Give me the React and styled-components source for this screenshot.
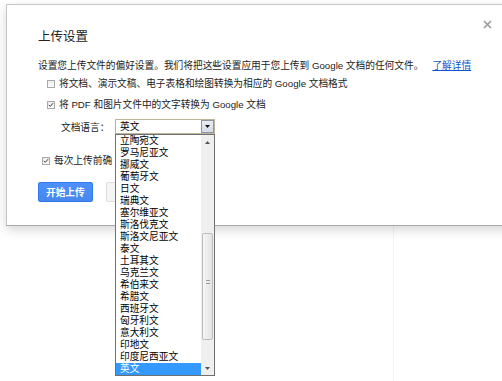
import React from "react";
import styled, { createGlobalStyle } from "styled-components";

const GlobalStyle = createGlobalStyle`
  html, body {
    margin: 0;
    padding: 0;
    background: #ffffff;
    overflow: hidden;
  }
  body {
    font-family: "Liberation Sans", Arial, "Noto Sans CJK SC", sans-serif;
    font-size: 9.7px;
    color: #222;
  }
`;

const Page = styled.div`
  padding: 4px 0 0 6px;
  width: 496px;
`;

const Dialog = styled.div`
  position: relative;
  width: 520px;
  background: #fff;
  border: 1px solid #c6c6c6;
  border-bottom-color: #a8a8a8;
  box-shadow: 0 4px 10px rgba(0, 0, 0, 0.16);
  padding: 25px 0 23px 31px;
  z-index: 2;
`;

const CloseButton = styled.div`
  position: absolute;
  top: 15px;
  left: 476px;
  width: 9px;
  height: 9px;
  display: flex;
  cursor: pointer;
`;

const Title = styled.div`
  font-size: 12.5px;
  line-height: 14px;
  height: 14px;
  color: #222;
`;

const Description = styled.div`
  margin-top: 16px;
  line-height: 12px;
  height: 12px;
  white-space: nowrap;
  color: #222;
`;

const Link = styled.a`
  margin-left: 9px;
  color: #1155cc;
  text-decoration: underline;
`;

const CheckRow = styled.div`
  display: flex;
  align-items: center;
  gap: 4px;
  height: 12px;
  line-height: 12px;
  margin-top: ${(p) => p.$top}px;
  padding-left: ${(p) => p.$indent}px;
  white-space: nowrap;
`;

const Box = styled.span`
  width: 8px;
  height: 8px;
  box-sizing: border-box;
  border: 1px solid #a9a9a9;
  background: linear-gradient(#ececec, #fdfdfd);
  display: flex;
  align-items: center;
  justify-content: center;
  flex: none;
`;

const LangRow = styled.div`
  display: flex;
  align-items: center;
  gap: 5px;
  height: 15px;
  margin-top: 8px;
  padding-left: 23px;
`;

const Label = styled.span`
  width: 49px;
  white-space: nowrap;
`;

const Select = styled.div`
  position: relative;
  box-sizing: border-box;
  width: 100px;
  height: 15px;
  border: 1px solid #bdb597;
  display: flex;
  background: #fff;
`;

const SelectValue = styled.span`
  flex: 1;
  padding-left: 4px;
  line-height: 13px;
  color: #000;
`;

const SelectArrow = styled.span`
  width: 13px;
  box-sizing: border-box;
  border: 1px solid #8797a8;
  background: linear-gradient(#e9edf2, #d4dbe4);
  display: flex;
  align-items: center;
  justify-content: center;
`;

const Dropdown = styled.div`
  position: absolute;
  top: calc(100% + 1px);
  left: -1px;
  width: 100px;
  box-sizing: border-box;
  border: 1px solid #707070;
  background: #fff;
  display: flex;
  z-index: 5;
`;

const Options = styled.div`
  flex: 1;
  display: flex;
  flex-direction: column;
`;

const Option = styled.div`
  height: 12px;
  line-height: 12px;
  padding-left: 4px;
  white-space: nowrap;
  color: ${(p) => (p.$selected ? "#fff" : "#000")};
  background: ${(p) => (p.$selected ? "#3399ff" : "transparent")};
`;

const Scrollbar = styled.div`
  width: 13px;
  display: flex;
  flex-direction: column;
  background: #efefef;
`;

const ScrollArrow = styled.div`
  height: 14px;
  display: flex;
  align-items: center;
  justify-content: center;
`;

const Track = styled.div`
  flex: 1;
  padding-top: 84px;
`;

const Thumb = styled.div`
  height: 107px;
  margin: 0 1px;
  box-sizing: border-box;
  border: 1px solid #bdbdbd;
  border-radius: 2px;
  background: linear-gradient(90deg, #f6f6f6, #e3e3e3);
  display: flex;
  align-items: center;
  justify-content: center;
`;

const Grip = styled.div`
  width: 4px;
  height: 4px;
  border-top: 1px solid #999;
  border-bottom: 1px solid #999;
  box-sizing: border-box;
  margin-top: -10px;
`;

const Actions = styled.div`
  display: flex;
  gap: 13px;
  margin-top: 15px;
`;

const Button = styled.div`
  height: 20px;
  min-width: ${(p) => (p.$primary ? 0 : 44)}px;
  box-sizing: border-box;
  padding: 0 7px;
  border-radius: 2px;
  display: flex;
  align-items: center;
  font-weight: bold;
  white-space: nowrap;
  color: ${(p) => (p.$primary ? "#fff" : "#444")};
  background: ${(p) => (p.$primary ? "linear-gradient(#4d90fe, #4787ed)" : "#f5f5f5")};
  border: 1px solid ${(p) => (p.$primary ? "#3079ed" : "#dcdcdc")};
`;

const Below = styled.div`
  display: grid;
  grid-template-columns: 387px 1fr;
  height: 160px;
`;

const Column = styled.div`
  border-left: ${(p) => (p.$divided ? "1px solid #f4f4f2" : "none")};
`;

const languages = [
  "立陶宛文",
  "罗马尼亚文",
  "挪威文",
  "葡萄牙文",
  "日文",
  "瑞典文",
  "塞尔维亚文",
  "斯洛伐克文",
  "斯洛文尼亚文",
  "泰文",
  "土耳其文",
  "乌克兰文",
  "希伯来文",
  "希腊文",
  "西班牙文",
  "匈牙利文",
  "意大利文",
  "印地文",
  "印度尼西亚文",
  "英文",
];

const Check = ({ checked }) => (
  <Box>
    {checked && (
      <svg width="8" height="8" viewBox="0 0 8 8">
        <path d="M1 3.8 L3 5.8 L6.8 1.6" fill="none" stroke="#2b2b2b" strokeWidth="1.2" />
      </svg>
    )}
  </Box>
);

const Triangle = ({ up, color = "#111" }) => (
  <svg width="5" height="3" viewBox="0 0 5 3">
    <path d={up ? "M0 3 L2.5 0 L5 3 Z" : "M0 0 L5 0 L2.5 3 Z"} fill={color} />
  </svg>
);

export default function App() {
  return (
    <>
      <GlobalStyle />
      <Page>
        <Dialog>
          <CloseButton>
            <svg width="9" height="9" viewBox="0 0 9 9">
              <path d="M1 1 L8 8 M8 1 L1 8" stroke="#9a9a9a" strokeWidth="1.6" />
            </svg>
          </CloseButton>
          <Title>上传设置</Title>
          <Description>
            设置您上传文件的偏好设置。我们将把这些设置应用于您上传到 Google 文档的任何文件。
            <Link>了解详情</Link>
          </Description>
          <CheckRow $top={6} $indent={9}>
            <Check />
            将文档、演示文稿、电子表格和绘图转换为相应的 Google 文档格式
          </CheckRow>
          <CheckRow $top={9} $indent={9}>
            <Check checked />
            将 PDF 和图片文件中的文字转换为 Google 文档
          </CheckRow>
          <LangRow>
            <Label>文档语言：</Label>
            <Select>
              <SelectValue>英文</SelectValue>
              <SelectArrow>
                <Triangle />
              </SelectArrow>
              <Dropdown>
                <Options>
                  {languages.map((l) => (
                    <Option key={l} $selected={l === "英文"}>
                      {l}
                    </Option>
                  ))}
                </Options>
                <Scrollbar>
                  <ScrollArrow>
                    <Triangle up color="#555" />
                  </ScrollArrow>
                  <Track>
                    <Thumb>
                      <Grip />
                    </Thumb>
                  </Track>
                  <ScrollArrow>
                    <Triangle color="#555" />
                  </ScrollArrow>
                </Scrollbar>
              </Dropdown>
            </Select>
          </LangRow>
          <CheckRow $top={21} $indent={4}>
            <Check checked />
            每次上传前确
          </CheckRow>
          <Actions>
            <Button $primary>开始上传</Button>
            <Button />
          </Actions>
        </Dialog>
        <Below>
          <Column />
          <Column $divided />
        </Below>
      </Page>
    </>
  );
}
